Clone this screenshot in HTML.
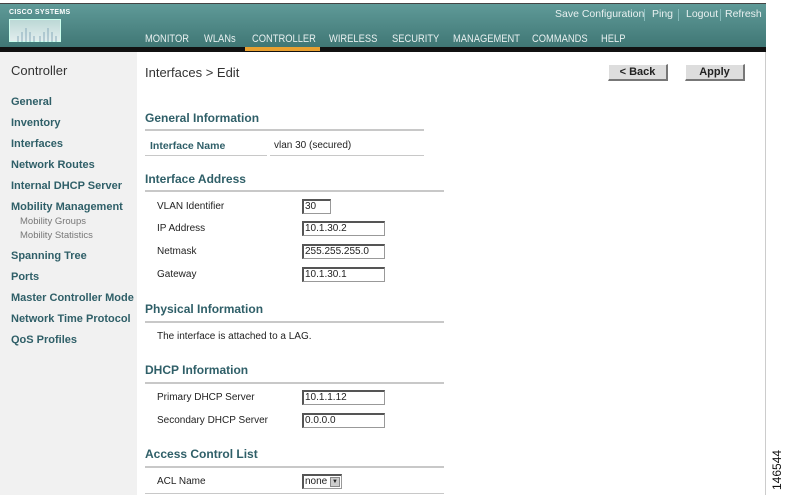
<!DOCTYPE html>
<html><head><style>
*{margin:0;padding:0;box-sizing:border-box}
body{width:785px;height:495px;background:#fff;font-family:"Liberation Sans",sans-serif;position:relative;overflow:hidden;font-size:10px;color:#222}
.a{position:absolute;white-space:nowrap}
#hdr{position:absolute;left:0;top:3px;width:766px;height:45px;background:linear-gradient(#5f9a98,#3f7674);border-top:1px solid #444}
#bar{position:absolute;left:0;top:47px;width:766px;height:5px;background:#111}
#side{position:absolute;left:0;top:52px;width:137px;height:443px;background:#f1f1f1}
#rb{position:absolute;left:765px;top:52px;width:1px;height:443px;background:#ccc}
.nav{color:#e8f0f0;font-size:11px;top:33px;transform:scaleX(0.85);transform-origin:0 0}
.tl{color:#e8f0f0;font-size:10.5px;top:8px}
.si{color:#2f5f68;font-weight:bold;font-size:11px;left:11px}
.ss{color:#777;font-size:9.5px;left:20px}
.h{color:#2f5f68;font-weight:bold;font-size:12px;left:145px}
.ln{position:absolute;height:2px;background:#c8c8c8;left:145px}
.lb{left:157px;font-size:10px;color:#222}
.in{position:absolute;left:302px;height:15px;border:1px solid #999;border-top:2px solid #555;border-left:2px solid #555;font-size:10px;padding-left:1px;line-height:11px;background:#fff}
.btn{position:absolute;height:17px;background:#ddd;border:1px solid #fff;border-right:2px solid #777;border-bottom:2px solid #777;font-weight:bold;font-size:11px;text-align:center;line-height:14px;color:#222}
</style></head><body>
<div id="hdr"></div><div id="bar"></div>
<div class="a" style="left:245px;top:47px;width:75px;height:4px;background:#e8a030"></div>
<div class="a" style="left:9px;top:9px;color:#fff;font-size:7px;font-weight:bold;letter-spacing:0.3px">CISCO SYSTEMS</div>
<div class="a" style="left:9px;top:19px;width:52px;height:23px;background:linear-gradient(#bcd8d6,#e2eeee);border:1px solid #cfe">
<svg width="52" height="23"><path d="M8 22V16M12 22V12M16 22V8M20 22V12M24 22V16M30 22V16M34 22V12M38 22V8M42 22V12M46 22V16" stroke="#8ab" stroke-width="1"/></svg></div>
<div class="a tl" style="left:555px">Save Configuration</div>
<div class="a" style="left:644px;top:9px;width:1px;height:12px;background:#8bb"></div>
<div class="a tl" style="left:652px">Ping</div>
<div class="a" style="left:678px;top:9px;width:1px;height:12px;background:#8bb"></div>
<div class="a tl" style="left:686px">Logout</div>
<div class="a" style="left:720px;top:9px;width:1px;height:12px;background:#8bb"></div>
<div class="a tl" style="left:725px">Refresh</div>
<div class="a nav" style="left:145px">MONITOR</div>
<div class="a nav" style="left:204px">WLANs</div>
<div class="a nav" style="left:252px">CONTROLLER</div>
<div class="a nav" style="left:329px">WIRELESS</div>
<div class="a nav" style="left:392px">SECURITY</div>
<div class="a nav" style="left:453px">MANAGEMENT</div>
<div class="a nav" style="left:532px">COMMANDS</div>
<div class="a nav" style="left:601px">HELP</div>
<div id="side"></div><div id="rb"></div>
<div class="a" style="left:11px;top:63px;font-size:13px;color:#333">Controller</div>
<div class="a si" style="top:96px">General</div>
<div class="a si" style="top:117px">Inventory</div>
<div class="a si" style="top:138px">Interfaces</div>
<div class="a si" style="top:159px">Network Routes</div>
<div class="a si" style="top:180px">Internal DHCP Server</div>
<div class="a si" style="top:201px">Mobility Management</div>
<div class="a ss" style="top:216px">Mobility Groups</div>
<div class="a ss" style="top:230px">Mobility Statistics</div>
<div class="a si" style="top:250px">Spanning Tree</div>
<div class="a si" style="top:271px">Ports</div>
<div class="a si" style="top:292px">Master Controller Mode</div>
<div class="a si" style="top:313px">Network Time Protocol</div>
<div class="a si" style="top:334px">QoS Profiles</div>
<div class="a" style="left:145px;top:65px;font-size:13px;color:#333">Interfaces &gt; Edit</div>
<div class="btn" style="left:608px;top:64px;width:60px">&lt; Back</div>
<div class="btn" style="left:685px;top:64px;width:60px">Apply</div>
<div class="a h" style="top:111px">General Information</div>
<div class="ln" style="top:129px;width:279px"></div>
<div class="a" style="left:150px;top:140px;font-weight:bold;font-size:10.5px;color:#2f5f68">Interface Name</div>
<div class="a" style="left:274px;top:140px;font-size:10px">vlan 30 (secured)</div>
<div class="ln" style="top:155px;width:122px;height:1px"></div>
<div class="ln" style="top:155px;left:270px;width:154px;height:1px"></div>
<div class="a h" style="top:172px">Interface Address</div>
<div class="ln" style="top:190px;width:299px"></div>
<div class="a lb" style="top:201px">VLAN Identifier</div>
<div class="in" style="top:199px;width:29px">30</div>
<div class="a lb" style="top:223px">IP Address</div>
<div class="in" style="top:221px;width:83px">10.1.30.2</div>
<div class="a lb" style="top:246px">Netmask</div>
<div class="in" style="top:244px;width:83px">255.255.255.0</div>
<div class="a lb" style="top:269px">Gateway</div>
<div class="in" style="top:267px;width:83px">10.1.30.1</div>
<div class="a h" style="top:302px">Physical Information</div>
<div class="ln" style="top:321px;width:299px"></div>
<div class="a lb" style="top:331px">The interface is attached to a LAG.</div>
<div class="a h" style="top:363px">DHCP Information</div>
<div class="ln" style="top:382px;width:299px"></div>
<div class="a lb" style="top:392px">Primary DHCP Server</div>
<div class="in" style="top:390px;width:83px">10.1.1.12</div>
<div class="a lb" style="top:415px">Secondary DHCP Server</div>
<div class="in" style="top:413px;width:83px">0.0.0.0</div>
<div class="a h" style="top:447px">Access Control List</div>
<div class="ln" style="top:466px;width:299px"></div>
<div class="a lb" style="top:476px">ACL Name</div>
<div class="in" style="top:474px;width:40px;padding-right:12px">none<span style="position:absolute;right:1px;top:1px;width:10px;height:10px;background:#ccc;border:1px solid #888;font-size:6px;line-height:9px;text-align:center">▼</span></div>
<div class="ln" style="top:493px;width:299px;height:1px"></div>
<div class="a" style="left:770px;top:490px;transform:rotate(-90deg);transform-origin:0 0;font-size:12px;color:#111">146544</div>
</body></html>
